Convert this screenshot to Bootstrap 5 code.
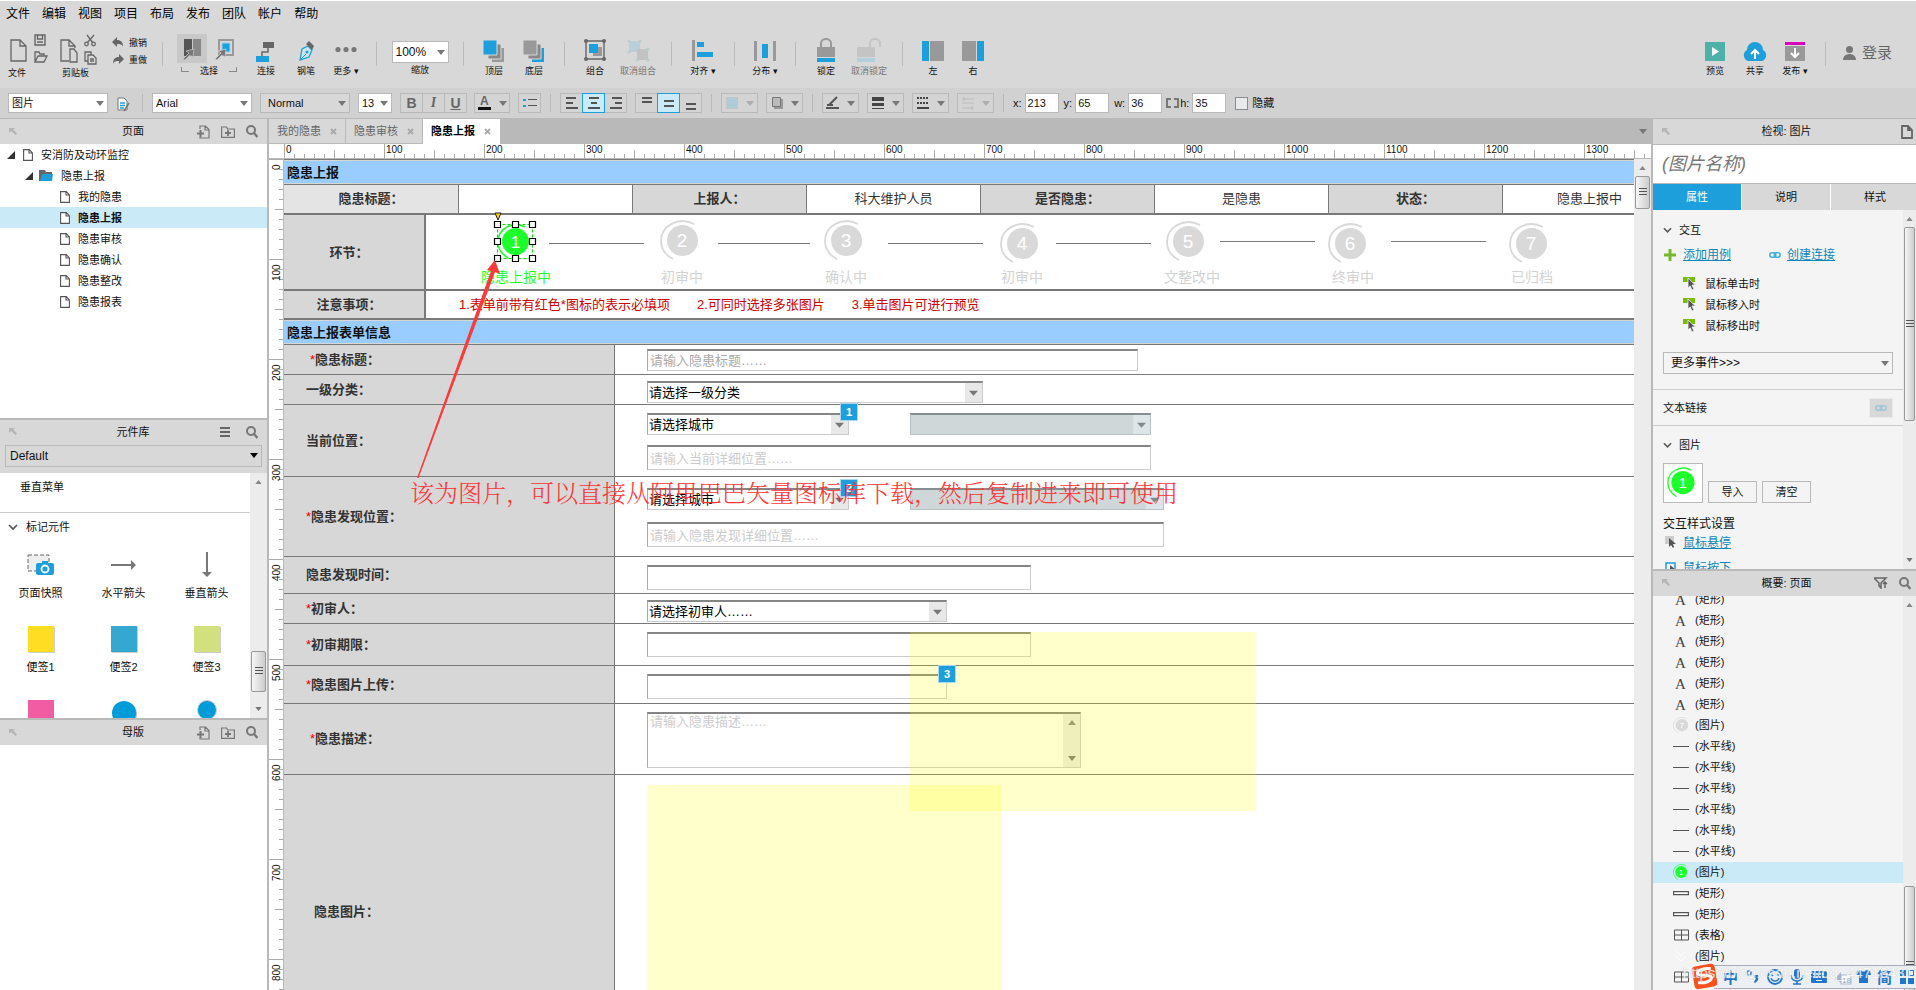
<!DOCTYPE html>
<html lang="zh-CN">
<head>
<meta charset="utf-8">
<meta name="viewport" content="width=device-width, initial-scale=1">
<title>隐患上报</title>
<link rel="stylesheet" href="https://cdn.jsdelivr.net/npm/bootstrap@5.3.0/dist/css/bootstrap.min.css">
<script src="https://cdn.jsdelivr.net/npm/bootstrap@5.3.0/dist/js/bootstrap.bundle.min.js"></script>
<style>
:root{--chrome:#d8d8d8;--edge:#b9b9b9;--ink:#666;--blue:#1c9fdb;--sel:#cbeaf7;--line:#797979;--cell:#d7d7d7}
body{font:11px/20px "Liberation Sans","Noto Sans CJK SC",sans-serif;color:#111;background:var(--chrome);height:100vh;overflow:hidden}
button,input,select,textarea{font:inherit;color:inherit;border-radius:0}
button{border:0;background:none;padding:0}
svg{display:block;flex:none}
p,h2,ul{margin:0;padding:0;font-size:inherit;line-height:inherit}
/* menu and toolbar */
.menubar{height:26px;padding:2px 6px 0;gap:12px;border-top:1px solid #fff}
.menubar a{font-size:12px;line-height:22px;color:#000;text-decoration:none}
.toolbar{height:62px;padding:8px 0 0 8px;font-size:9px}
.toolbar button,.toolbar label{line-height:14px}
.tool{width:40px;display:flex;flex-direction:column;align-items:center}
.tool svg{height:30px}
.tool-mid{width:42px}
.tool-wide{width:46px}
.dim{color:#777}
.tsep{width:1px;height:24px;background:#bbb;margin:8px 10px 0}
.duo{width:42px;margin-right:8px}
.undo{width:44px}
.undo button{height:17px;display:flex;align-items:center;gap:5px}
.pick{width:64px;margin:0 5px 0 4px}
.pick button{width:30px;height:29px;display:flex;align-items:center;justify-content:center}
.pick .on{background:#c8c8c8}
.brk{width:8px;height:5px;border:solid #888;border-width:0 0 1px 1px}
.brk-r{border-width:0 1px 1px 0}
.zoomtool{width:66px}
.axsel{appearance:none;border:1px solid var(--edge);background:#fff url("data:image/svg+xml,%3Csvg xmlns='http://www.w3.org/2000/svg' width='8' height='5'%3E%3Cpath d='M0 0h8L4 5z' fill='%23777'/%3E%3C/svg%3E") no-repeat right 3px center;padding:0 12px 0 3px}
.zoomtool .axsel{width:57px;height:22px;margin:7px 0 0;font-size:12px;line-height:18px}
.login{font-size:15px;color:#666;gap:6px;margin:8px 24px 0 7px;height:22px;line-height:20px}
/* style bar */
.stylebar{height:31px;background:#d1d1d1;border-bottom:1px solid var(--edge);padding:5px 0 0 8px}
.stylebar .axsel,.num{height:20px;line-height:18px;border:1px solid var(--edge)}
.w100{width:100px}.w90{width:90px}.w34{width:34px}
.stylebar .grey{background-color:var(--chrome);padding-left:7px}
.sbtn{height:20px;width:23px;border:1px solid var(--edge);display:inline-flex;align-items:center;justify-content:center;color:var(--ink);margin-right:-1px;background:#d4d4d4}
.sbtn.on{border-color:var(--blue);background:var(--sel);z-index:1}
.sbtn.drop{width:37px;gap:7px;margin:0 8px 0 0}
.sbtn.ink{width:36px;margin-left:8px}
.ssep{width:1px;height:18px;background:var(--edge);margin:1px 9px 0 1px}
.num{width:34px;background:#fff;padding:0 2px;margin:0 5px 0 3px}
.stylebar label{line-height:20px}
.hidebox{width:13px;height:13px;border:1px solid #8c8c8c;background:#e8eaec}
.glyph{font:bold 14px/18px "Liberation Sans",sans-serif}
.it{font:italic bold 14px/18px "Liberation Serif",serif}
/* docked panels */
.side-l{width:269px;border-right:2px solid var(--edge)}
.side-r{width:265px;border-left:2px solid var(--edge)}
.dock{min-height:0;overflow:hidden;display:flex;flex-direction:column;flex-basis:0;background:#fff}
.g300{flex-grow:300}.g271{flex-grow:271}.g451{flex-grow:451}.g420{flex-grow:420}
.cut{border-bottom:2px solid var(--edge)}
.dockhead{height:25px;background:var(--chrome);flex:none;padding:0 18px 0 9px;position:relative}
.side-r .dockhead{padding-right:13px}
.dockhead h2{flex:1;text-align:center;line-height:25px;font-weight:400}
.dockhead .acts{position:absolute;right:9px;gap:11px}
.tree button{display:flex;align-items:center;width:100%;height:21px;text-align:left;gap:8px;line-height:20px}
.lv0{padding-left:7px!important}.lv1{padding-left:25px!important}.lv2{padding-left:60px!important}
.picked{background:var(--sel)}
.libsel{background:var(--chrome);height:28px;padding:0 5px;flex:none}
.libsel select{width:257px;height:22px;font-size:12px;padding-left:4px;background:url("data:image/svg+xml,%3Csvg xmlns='http://www.w3.org/2000/svg' width='8' height='5'%3E%3Cpath d='M0 0h8L4 5z'/%3E%3C/svg%3E") no-repeat right 3px center}
.sb{width:17px;background:#ececec;flex:none;position:relative;display:flex;flex-direction:column;justify-content:space-between;align-items:center;padding:7px 0}
.thumb{position:absolute;left:1px;right:1px;border:1px solid #999;border-radius:2px;background:linear-gradient(90deg,#f6f6f6,#ccc);display:flex;align-items:center;justify-content:center}
.thumb::after{content:"";width:8px;height:9px;background:repeating-linear-gradient(#555 0 1px,transparent 1px 3px)}
.t-lib{top:178px;height:41px}.t-cv{top:17px;height:33px}.t-in{top:17px;height:194px}.t-out{top:290px;height:160px}
.libgrid{display:grid;grid-template-columns:repeat(3,83px);margin-left:-1px}
.libgrid>div{display:flex;flex-direction:column;align-items:center;height:74px}
.libgrid svg{width:38px;height:38px}
/* editor */
.editor{min-width:0;background:#fff}
.tabsrow{height:25px;background:var(--edge)}
.tabsrow button{width:77px;height:25px;background:var(--chrome);color:#666;padding:0 8px;border:solid var(--edge);border-width:0 1px 1px 0;display:flex;align-items:center;justify-content:space-between}
.tabsrow button.on{background:#fff;color:#000;font-weight:700;border-color:#fff}
.hruler{height:15px;border-bottom:1px solid var(--edge);padding-left:15px;overflow:hidden;font-size:10px}
.hruler div{display:flex;width:1367px;height:14px;flex:none;background:
 repeating-linear-gradient(90deg,#aaa 0 1px,transparent 1px 100px),
 repeating-linear-gradient(90deg,#aaa 0 1px,transparent 1px 50px) 0 6px/100% 8px no-repeat,
 repeating-linear-gradient(90deg,#aaa 0 1px,transparent 1px 10px) 0 10px/100% 4px no-repeat}
.hruler span{width:100px;padding-left:2px;line-height:12px;flex:none}
.vruler{width:15px;border-right:1px solid var(--edge);flex:none;overflow:hidden;font-size:10px;background:
 repeating-linear-gradient(#aaa 0 1px,transparent 1px 100px),
 repeating-linear-gradient(#aaa 0 1px,transparent 1px 50px) 6px 0/8px 100% no-repeat,
 repeating-linear-gradient(#aaa 0 1px,transparent 1px 10px) 10px 0/4px 100% no-repeat}
.vruler span{display:block;height:100px;padding-bottom:5px;writing-mode:vertical-rl;transform:rotate(180deg);line-height:12px;padding-right:2px;text-align:right}
.canvas{position:relative;overflow:hidden;flex:1;min-width:0;font-size:13px;color:#333}
.board{width:1393px}
.band{height:26px;background:#9cf;border:solid var(--line);border-width:1px 0;box-shadow:inset 0 1px #d7d7d7,inset 0 -1px #d7d7d7;font-weight:700;color:#111;line-height:25px;padding-left:3px}
.band.second{height:25px;border-top:0}
.info{display:grid;grid-template-columns:175px repeat(7,174px);height:30px;border-bottom:2px solid var(--line);text-align:center;line-height:28px}
.info>*{border-right:1px solid var(--line)}
.hd{background:var(--cell);font-weight:700}
.hd.pale{background:#e4e4e4}
.strip{border-bottom:2px solid var(--line)}
.strip .hd{width:142px;border-right:2px solid var(--line);text-align:center;padding-right:10px}
.steps{height:76px;line-height:75px}
.remarks{height:29px;line-height:28px;color:#c00}
.remarks .hd{color:#333}
.remarks span{margin-left:27px}
.remarks span:nth-child(2){margin-left:33px}
.frow{border-bottom:1px solid var(--line)}
.frow>label{width:331px;background:var(--cell);border-right:1px solid var(--line);padding-left:22px;font-weight:700;display:flex;align-items:center;flex:none}
.frow>.inset{padding-left:26px}
.frow i{color:#e00;font-style:normal;font-weight:400}
.frow>div{padding-left:32px}
.h30{height:30px}.h37{height:37px}.h38{height:38px}.h42{height:42px}.h71{height:71px}.h72{height:72px}.h80{height:80px}.h274{height:274px}
.pt4{padding-top:4px}.pt6{padding-top:6px}.pt8{padding-top:8px}.pt11{padding-top:11px}
.fld{display:block;height:25px;border:1px solid #ccc;border-top:2px solid #858585;border-left-color:#aaa;background:#fff;padding:0 2px;line-height:20px}
.fld::placeholder{color:#ccc;opacity:1}
.mid::placeholder{color:#aaa}
.low{height:22px;line-height:17px}
.gap10{margin-top:10px}.gap12{margin-top:12px}
select.fld{appearance:none;color:#000;line-height:18px;padding:0 1px;background:#fff url("data:image/svg+xml,%3Csvg xmlns='http://www.w3.org/2000/svg' width='17' height='20'%3E%3Cpath d='M0 0h17v20H0z' fill='%23e8e8e8'/%3E%3Cpath d='M4 8h9l-4.500 5z' fill='%23777'/%3E%3C/svg%3E") no-repeat right center}
select.fld:disabled{background:#cfd7d9 url("data:image/svg+xml,%3Csvg xmlns='http://www.w3.org/2000/svg' width='17' height='20'%3E%3Cpath d='M0 0h17v20H0z' fill='%23dde5e8'/%3E%3Cpath d='M4 8h9l-4.500 5z' fill='%237f8a8d'/%3E%3C/svg%3E") no-repeat right center;border-color:#b9c2c5;border-top-color:#858d90;opacity:1}
.w202{width:202px}.w241{width:241px}.w254{width:254px}.w300{width:300px}.w336{width:336px}.w384{width:384px}.w434{width:434px}.w491{width:491px}.w504{width:504px}.w517{width:517px}
.second-sel{margin-left:61px}
.fld.area{height:56px;resize:none;line-height:16px;overflow:hidden}
.areawrap{position:relative}
.areawrap .sb{position:absolute;right:1px;top:2px;bottom:1px;padding:6px 0}
/* free canvas layer */
.over{position:absolute;inset:0;width:1392px;height:900px}
.over text{font-family:"Liberation Sans","Noto Sans CJK SC",sans-serif}
.say{position:absolute;left:126px;top:316px;font:300 24px/34px "Noto Serif CJK SC","Noto Sans CJK SC",serif;color:#ff3434;white-space:nowrap}
/* inspector */
.namebox{height:40px;border:solid var(--edge);border-width:1px 0;background:#fff;padding:0 9px;font-size:18px;font-style:italic;width:100%;flex:none}
.namebox::placeholder{color:#777;opacity:1}
.itabs button{width:88px;height:26px;background:var(--chrome);margin-right:1px;flex:none;line-height:24px}
.itabs .on{background:var(--blue);color:#fff}
.insp{background:#f4f4f4;flex:1;min-width:0;overflow:hidden;padding:1px 0 0}
.insp a{color:#0e86b9;font-size:12px}
.pad{padding:0 10px}
.ln{height:21px;display:flex;align-items:center}
.rule{border-top:1px solid #ccc}
.boxed{border:1px solid var(--edge);background:#f4f4f4;height:22px;width:49px;margin-left:5px}
.narrow{width:13px}
.out{background:#f4f4f4;overflow:hidden;flex:1}
.out ul{margin-top:-7px}
.out .tree button{padding-left:20px;gap:6px}
.out .tree svg{width:16px;height:16px}
.ime{position:absolute;right:0;bottom:0;width:226px;height:27px}
.mark-line{position:absolute;right:3px;bottom:8px;font:15px/18px "Liberation Sans",sans-serif;color:#fff;opacity:.75;text-shadow:0 0 1px #aaa;white-space:nowrap}
</style>
</head>
<body class="d-flex flex-column">
<svg width="0" height="0" class="position-absolute" aria-hidden="true">
<defs>
<symbol id="page" viewBox="0 0 10 12"><path d="M.6.6h5.700L9.400 4v7.400H.6zM6 .6V4h3.400" fill="#fff" stroke="#555" stroke-width="1.100"/></symbol>
<symbol id="pop" viewBox="0 0 8 8"><path d="M0 0h6L4.400 1.600 8 5.500 6.500 7 2 3 0 5z" fill="#b5b5b5"/></symbol>
<symbol id="find" viewBox="0 0 12 13"><circle cx="5" cy="5" r="4" fill="none" stroke="#777" stroke-width="2"/><path d="m8 8 3.500 4" stroke="#777" stroke-width="2.400"/></symbol>
<symbol id="addpage" viewBox="0 0 13 14"><path d="M3 4V1h5.500L12 4.500V13H3v-1M8 1v4h4" fill="none" stroke="#777" stroke-width="1.200"/><path d="M0 8.500h7M3.500 5v7" stroke="#777" stroke-width="2"/></symbol>
<symbol id="adddir" viewBox="0 0 14 12"><path d="M.6 11.400V1h5l1 2h6.800v8.400z" fill="none" stroke="#777" stroke-width="1.200"/><path d="M4 7h6M7 4v6" stroke="#777" stroke-width="1.800"/></symbol>
<symbol id="chev" viewBox="0 0 10 6"><path d="m1 1 4 4 4-4" fill="none" stroke="#555" stroke-width="1.700"/></symbol>
<symbol id="dn" viewBox="0 0 8 5"><path d="M0 0h8L4 5z" fill="#777"/></symbol>
<symbol id="up" viewBox="0 0 8 5"><path d="M0 5h8L4 0z" fill="#888"/></symbol>
<symbol id="tri" viewBox="0 0 8 8"><path d="M0 8h8V0z" fill="#333"/></symbol>
<symbol id="x" viewBox="0 0 7 7"><path d="m1 1 5 5m0-5L1 6" stroke="#aaa" stroke-width="1.900"/></symbol>
<symbol id="cur" viewBox="0 0 13 13"><path d="M0 0h12v5H0z" fill="#76bc00"/><path d="M5 1v10l2.200-2L9 13l2-1-2-4h3.500z" fill="#555" stroke="#f4f4f4" stroke-width=".8"/></symbol>
<symbol id="link" viewBox="0 0 12 8"><rect x=".8" y="1.800" width="6" height="4.400" rx="2.200" fill="none" stroke="#41afdc" stroke-width="1.500"/><rect x="5.200" y="1.800" width="6" height="4.400" rx="2.200" fill="none" stroke="#41afdc" stroke-width="1.500"/></symbol>
<symbol id="ln" viewBox="0 0 16 16"><path d="M0 8h16v1H0z" fill="#555"/></symbol>
<symbol id="rc" viewBox="0 0 16 16"><path d="M.6 6.600h14.800v3H.6z" fill="#fff" stroke="#555" stroke-width="1.200"/></symbol>
<symbol id="tb" viewBox="0 0 16 16"><path d="M1.500 3h14v10h-14zM8.500 3v10m-7-5h14" fill="none" stroke="#555"/></symbol>
<symbol id="ltr" viewBox="0 0 16 16"><text x="2" y="14" font-family="Liberation Serif" font-size="15" fill="#444">A</text></symbol>
<symbol id="badge-off" viewBox="0 0 40 40"><circle cx="22.500" cy="20.500" r="15.500" fill="#d9d9d9"/><path d="M34 4C18-4 1 6 1 21c0 8 4 14 12 18" fill="none" stroke="#d9d9d9" stroke-width="1.800"/></symbol>
<symbol id="badge-on" viewBox="0 0 36 35"><circle cx="18.500" cy="17.500" r="13.500" fill="#1cff2b"/><path d="M28 3C16-3 1 4 1 18c0 8 4 12 10 16" fill="none" stroke="#1cff2b" stroke-width="1.600"/><text x="18.500" y="23.500" text-anchor="middle" font-size="17" fill="#fff" font-family="Liberation Sans">1</text></symbol>
</defs></svg>

<nav class="menubar d-flex flex-shrink-0" aria-label="主菜单">
<a href="#">文件</a><a href="#">编辑</a><a href="#">视图</a><a href="#">项目</a><a href="#">布局</a><a href="#">发布</a><a href="#">团队</a><a href="#">帐户</a><a href="#">帮助</a>
</nav>

<header class="toolbar d-flex align-items-start flex-shrink-0">
<button class="duo text-start"><svg width="42" height="32" fill="none" stroke="#666" stroke-width="1.300"><path d="M3 6h9l6 6v15H3zM12 6v6h6"/><path d="M27 1h10v10H27zM29.500 1v4h5V1M29 8h6" stroke-width="1.400"/><path d="M27 28V18h4l1 2h4v2M27 28l3-6h9l-3 6z"/></svg><span class="d-block">文件</span></button>
<button class="duo text-start"><svg width="42" height="32" fill="none" stroke="#666" stroke-width="1.300"><path d="M11 27H3V6h8l6 6v2M11 6v6h6"/><path d="M12 15h4l3 4v9h-7z" fill="#d8d8d8"/><path d="m29 1 6 8m1-8-7 8"/><circle cx="28.500" cy="10" r="1.800"/><circle cx="35.500" cy="10" r="1.800"/><path d="M30 18h-3v9h3M27 18h6v3M30 21h5l3 3v6h-8zM32 25h4m-4 2h4"/></svg><span class="d-block ps-1">剪贴板</span></button>
<div class="undo"><button><svg width="12" height="11" class="ms-1"><path d="M0 5 5 0v3c4 0 6 2 6 7C10 7 8 7 5 7v3z" fill="#666"/></svg>撤销</button><button><svg width="12" height="11" class="ms-1"><path d="M12 5 7 0v3C3 3 1 5 1 10c1-3 3-3 6-3v3z" fill="#666"/></svg>重做</button></div>
<span class="tsep"></span>
<div class="pick"><div class="d-flex gap-1"><button class="on" aria-label="相交选中"><svg width="22" height="24"><path d="M3 2h8v17H3z" fill="#555"/><path d="M12 2h8v17h-8z" fill="#888"/><path d="m2 22 6-6-3-2 8-2-1 8-3-2-5 5z" fill="#777" stroke="#ccc" stroke-width=".7"/></svg></button><button aria-label="包含选中"><svg width="22" height="24"><path d="M4 3h14v15H4z" fill="none" stroke="#999" stroke-width="2"/><path d="M7 6h8v9H7z" fill="#1c9fdb" stroke="#9bd3ee"/><path d="m0 22 6-6-3-2 8-2-1 8-3-2-5 5z" fill="#777" stroke="#d8d8d8" stroke-width=".7"/></svg></button></div><div class="d-flex justify-content-between px-1"><span class="brk mt-1"></span><span class="lh-1 mt-1">选择</span><span class="brk brk-r mt-1"></span></div></div>
<button class="tool"><svg width="22"><path d="M8 8h11v6H8z" fill="#666"/><path d="M13 14v4H7v4" fill="none" stroke="#666" stroke-width="1.500"/><path d="M1 22h13v6H1z" fill="#1c9fdb"/></svg>连接</button>
<button class="tool"><svg width="18"><path d="M3 26 5 15l6-3 4 4-3 7z" fill="#cbe6f3" stroke="#1c9fdb" stroke-width="1.300"/><path d="m3 26 6-6" stroke="#1c9fdb"/><circle cx="10" cy="18" r="1.500" fill="#1c9fdb"/><path d="m9 10 3-3 5 5-2 4z" fill="#666"/></svg>钢笔</button>
<button class="tool"><svg width="22"><g fill="#777"><circle cx="3" cy="15.500" r="2.600"/><circle cx="11" cy="15.500" r="2.600"/><circle cx="19" cy="15.500" r="2.600"/></g></svg>更多 ▾</button>
<span class="tsep"></span>
<div class="zoomtool text-center"><select class="axsel" id="zoom"><option>100%</option></select><label class="d-block" for="zoom">缩放</label></div>
<span class="tsep"></span>
<button class="tool"><svg width="22"><path d="M9 14h12v14H9z" fill="#999"/><path d="M5 10h13v15H5z" fill="#888" stroke="#d8d8d8"/><path d="M0 6h14v15H0z" fill="#1c9fdb" stroke="#d8d8d8"/></svg>顶层</button>
<button class="tool"><svg width="22"><path d="M9 14h12v14H9z" fill="#1c9fdb"/><path d="M5 10h13v15H5z" fill="#888" stroke="#d8d8d8"/><path d="M0 6h14v15H0z" fill="#999" stroke="#d8d8d8"/></svg>底层</button>
<span class="tsep"></span>
<button class="tool"><svg width="24"><path d="M10 13h9v9h-9z" fill="#999"/><path d="M6 10h9v9H6z" fill="#1c9fdb"/><path d="M3 7h18v18H3z" fill="none" stroke="#666" stroke-width="1.400"/><g fill="#666"><circle cx="3" cy="7" r="2"/><circle cx="21" cy="7" r="2"/><circle cx="3" cy="25" r="2"/><circle cx="21" cy="25" r="2"/></g></svg>组合</button>
<button class="tool tool-wide dim"><svg width="24"><path d="M3 7h11v11H3z" fill="#b9cfd9"/><path d="M11 15h11v11H11z" fill="#c2c2c2"/><g fill="#bccbd1"><circle cx="3" cy="7" r="1.500"/><circle cx="14" cy="7" r="1.500"/><circle cx="3" cy="18" r="1.500"/><circle cx="22" cy="15" r="1.500"/><circle cx="11" cy="26" r="1.500"/><circle cx="22" cy="26" r="1.500"/></g></svg>取消组合</button>
<span class="tsep"></span>
<button class="tool tool-mid"><svg width="24"><path d="M1 6h3v21H1z" fill="#999"/><path d="M6 8h7v5H6zM6 18h16v5H6z" fill="#1c9fdb"/></svg>对齐 ▾</button>
<span class="tsep"></span>
<button class="tool"><svg width="24"><path d="M1 7h3v20H1zM20 7h3v20h-3z" fill="#999"/><path d="M9 10h6v14H9z" fill="#1c9fdb"/></svg>分布 ▾</button>
<span class="tsep"></span>
<button class="tool"><svg width="20"><path d="M5 13V9a5 4 0 0 1 10 0v4" fill="none" stroke="#999" stroke-width="2"/><path d="M1 13h18v10H1z" fill="#999"/><path d="M1 24h18v4H1z" fill="#1c9fdb"/></svg>锁定</button>
<button class="tool tool-wide dim"><svg width="26"><path d="M14 13V9a5 4 0 0 1 10 0v4" fill="none" stroke="#c4c4c4" stroke-width="2"/><path d="M1 13h18v10H1z" fill="#c4c4c4"/><path d="M1 24h18v4H1z" fill="#b3cfdb"/></svg>取消锁定</button>
<span class="tsep"></span>
<button class="tool"><svg width="22"><path d="M0 7h7v20H0z" fill="#1c9fdb"/><path d="M8 7h14v20H8z" fill="#999"/></svg>左</button>
<button class="tool"><svg width="22"><path d="M15 7h7v20h-7z" fill="#1c9fdb"/><path d="M0 7h14v20H0z" fill="#999"/></svg>右</button>
<div class="ms-auto d-flex">
<button class="tool"><svg width="20"><path d="M0 8h20v19H0z" fill="#4db1a7"/><path d="m7 13 7 4.500L7 22z" fill="#fff"/></svg>预览</button>
<button class="tool"><svg width="26"><path d="M6 27a6 6 0 0 1-1-11 8 8 0 0 1 16 0 6 6 0 0 1-1 11z" fill="#1c9fdb"/><path d="M13 25v-8m-4 3 4-4 4 4" fill="none" stroke="#fff" stroke-width="2"/></svg>共享</button>
<button class="tool"><svg width="20"><path d="M0 8h20v3H0z" fill="#d800b8"/><path d="M0 12h20v15H0z" fill="#999"/><path d="M10 14v9m-4-4 4 4 4-4" fill="none" stroke="#fff" stroke-width="2"/></svg>发布 ▾</button>
<span class="tsep"></span>
<button class="login d-flex align-items-center"><svg width="13" height="14"><circle cx="6.500" cy="3.500" r="3.500" fill="#777"/><path d="M0 14c0-8 13-8 13 0z" fill="#777"/></svg>登录</button>
</div>
</header>

<div class="stylebar d-flex flex-shrink-0">
<select class="axsel w100" aria-label="部件类型"><option>图片</option></select>
<svg width="14" height="16" class="mx-2 mt-1"><path d="M2 1h6l3 3v9H2z" fill="#fff" stroke="#777"/><path d="M4 6h5M4 8.500h5M4 11h4" stroke="#1c9fdb" stroke-width="1.300"/><path d="m8 14 5-8" stroke="#777" stroke-width="1.500"/></svg>
<span class="ssep ms-1"></span>
<select class="axsel w100" aria-label="字体"><option>Arial</option></select>
<select class="axsel w90 grey mx-2" aria-label="字形"><option>Normal</option></select>
<select class="axsel w34 me-2" aria-label="字号"><option>13</option></select>
<button class="sbtn glyph">B</button><button class="sbtn it">I</button><button class="sbtn"><u class="glyph">U</u></button>
<button class="sbtn drop ink" aria-label="文字颜色"><svg width="14" height="16"><text x="2" y="10" font-size="12" font-weight="bold" fill="#666">A</text><path d="M0 12h13v3H0z" fill="#111"/></svg><svg width="8" height="5"><use href="#dn"/></svg></button>
<button class="sbtn me-2" aria-label="项目符号"><svg width="14" height="10"><path d="M0 1h3v2H0zM0 7h3v2H0z" fill="#1c9fdb"/><path d="M5 1h9v1H5zM5 7h9v1H5z" fill="#555"/></svg></button>
<span class="ssep"></span>
<button class="sbtn" aria-label="左对齐"><svg width="14" height="13" fill="#555"><path d="M1 0h10v2H1zM1 5h7v2H1zM1 10h12v2H1z"/></svg></button><button class="sbtn on" aria-label="居中"><svg width="14" height="13" fill="#555"><path d="M2 0h10v2H2zM4 5h6v2H4zM1 10h12v2H1z"/></svg></button><button class="sbtn me-2" aria-label="右对齐"><svg width="14" height="13" fill="#555"><path d="M3 0h10v2H3zM6 5h7v2H6zM1 10h12v2H1z"/></svg></button>
<button class="sbtn" aria-label="顶端"><svg width="14" height="13" fill="#555"><path d="M2 0h10v2H2zM2 4h10v2H2z"/></svg></button><button class="sbtn on" aria-label="中部"><svg width="14" height="13" fill="#555"><path d="M2 3h10v2H2zM2 8h10v2H2z"/></svg></button><button class="sbtn me-2" aria-label="底部"><svg width="14" height="13" fill="#555"><path d="M2 6h10v2H2zM2 11h10v2H2z"/></svg></button>
<span class="ssep"></span>
<button class="sbtn drop" aria-label="填充"><svg width="13" height="13"><path d="M.5.5h11v11H.5z" fill="#b0ccd8" stroke="#c4c4c4"/></svg><svg width="8" height="5" opacity=".4"><use href="#dn"/></svg></button><button class="sbtn drop" aria-label="阴影"><svg width="13" height="14"><path d="M3 3h9v10H3z" fill="#999"/><path d="M1.500 1.500h8v9h-8z" fill="#bbb" stroke="#777"/></svg><svg width="8" height="5"><use href="#dn"/></svg></button>
<span class="ssep"></span>
<button class="sbtn drop" aria-label="线色"><svg width="14" height="14"><path d="m3 9 8-8M1 9h6" stroke="#555" stroke-width="2"/><path d="M0 11h13v2H0z" fill="#555"/></svg><svg width="8" height="5"><use href="#dn"/></svg></button><button class="sbtn drop" aria-label="线宽"><svg width="13" height="13" fill="#444"><path d="M0 0h12v4H0zM0 6h12v3H0zM0 11h12v1H0z"/></svg><svg width="8" height="5"><use href="#dn"/></svg></button><button class="sbtn drop" aria-label="线型"><svg width="13" height="13" stroke="#444"><path d="M0 1h12M0 6h12" stroke-dasharray="2 1" stroke-width="2"/><path d="M0 11h12" stroke-width="2"/></svg><svg width="8" height="5"><use href="#dn"/></svg></button><button class="sbtn drop" aria-label="箭头"><svg width="13" height="13" stroke="#bbb"><path d="M0 2h12M0 6h12M0 11h12M2 0v4M10 9v4"/></svg><svg width="8" height="5" opacity=".4"><use href="#dn"/></svg></button>
<span class="ssep"></span>
<label for="nx">x:</label><input class="num" id="nx" value="213"><label for="ny">y:</label><input class="num" id="ny" value="65"><label for="nw">w:</label><input class="num me-0" id="nw" value="36">
<svg width="14" height="20" class="ms-1" fill="none" stroke="#777" stroke-width="2"><path d="M5 6H1v8h4M8 6h4v8H8"/></svg>
<label for="nh">h:</label><input class="num" id="nh" value="35">
<input type="checkbox" class="form-check-input hidebox rounded-0 m-1" id="hid"><label for="hid">隐藏</label>
</div>

<div class="d-flex flex-grow-1" style="min-height:0">
<aside class="side-l d-flex flex-column flex-shrink-0">
<section class="dock g300 cut">
<div class="dockhead d-flex align-items-center"><svg width="8" height="8"><use href="#pop"/></svg><h2>页面</h2><div class="acts d-flex align-items-center"><svg width="13" height="14"><use href="#addpage"/></svg><svg width="14" height="12"><use href="#adddir"/></svg><svg width="12" height="13"><use href="#find"/></svg></div></div>
<ul class="tree list-unstyled">
<li><button class="lv0"><svg width="8" height="8"><use href="#tri"/></svg><svg width="10" height="12"><use href="#page"/></svg>安消防及动环监控</button></li>
<li><button class="lv1"><svg width="8" height="8"><use href="#tri"/></svg><svg width="14" height="12" style="margin-left:-2px"><path d="M0 0h6l1 2h6v9H0z" fill="#666"/><path d="M1 11 3 4h11l-1 7z" fill="#1c9fdb"/></svg>隐患上报</button></li>
<li><button class="lv2"><svg width="10" height="12"><use href="#page"/></svg>我的隐患</button></li>
<li><button class="lv2 picked fw-bold"><svg width="10" height="12"><use href="#page"/></svg>隐患上报</button></li>
<li><button class="lv2"><svg width="10" height="12"><use href="#page"/></svg>隐患审核</button></li>
<li><button class="lv2"><svg width="10" height="12"><use href="#page"/></svg>隐患确认</button></li>
<li><button class="lv2"><svg width="10" height="12"><use href="#page"/></svg>隐患整改</button></li>
<li><button class="lv2"><svg width="10" height="12"><use href="#page"/></svg>隐患报表</button></li>
</ul>
</section>
<section class="dock g300 cut">
<div class="dockhead d-flex align-items-center"><svg width="8" height="8"><use href="#pop"/></svg><h2>元件库</h2><div class="acts d-flex align-items-center gap-3"><svg width="10" height="10" fill="#666"><path d="M0 0h10v2H0zM0 4h10v2H0zM0 8h10v2H0z"/></svg><svg width="12" height="13"><use href="#find"/></svg></div></div>
<div class="libsel"><select class="axsel" aria-label="元件库"><option>Default</option></select></div>
<div class="d-flex flex-grow-1 overflow-hidden">
<div class="flex-grow-1">
<p class="ps-3 pt-1 ms-1" style="height:39px">垂直菜单</p>
<div class="rule d-flex align-items-center ps-2 gap-2 pt-1"><svg width="10" height="6"><use href="#chev"/></svg><span>标记元件</span></div>
<div class="libgrid mt-2">
<div><svg><path d="M6 10h21v16H6z" fill="#eee" stroke="#666" stroke-dasharray="4 2"/><rect x="14" y="18" width="18" height="12" rx="2" fill="#1c9fdb"/><path d="M20 16h6v3h-6z" fill="#1c9fdb"/><circle cx="23" cy="24" r="3.500" fill="none" stroke="#fff" stroke-width="1.800"/></svg>页面快照</div>
<div><svg fill="#777"><path d="M6 19h21v2H6zM26 15l5 5-5 5z"/></svg>水平箭头</div>
<div><svg fill="#777"><path d="M18 7h2v21h-2zM14 27h10l-5 5z"/></svg>垂直箭头</div>
<div><svg><path d="M7 8h26v26H7z" fill="#ccc"/><path d="M6 7h26v26H6z" fill="#ffdd22"/></svg>便签1</div>
<div><svg><path d="M7 8h26v26H7z" fill="#ccc"/><path d="M6 7h26v26H6z" fill="#35a8d0"/></svg>便签2</div>
<div><svg><path d="M7 8h26v26H7z" fill="#ccc"/><path d="M6 7h26v26H6z" fill="#d2e07d"/></svg>便签3</div>
<div><svg><path d="M6 7h26v26H6z" fill="#f25ca2"/></svg></div>
<div><svg><circle cx="20" cy="21" r="12" fill="#bbb"/><circle cx="19" cy="20" r="12" fill="#009cda"/></svg></div>
<div><svg><circle cx="19" cy="17" r="9.500" fill="#009cda" stroke="#ccc"/></svg></div>
</div>
</div>
<div class="sb"><svg width="7" height="4"><use href="#up"/></svg><span class="thumb t-lib"></span><svg width="7" height="4"><use href="#dn"/></svg></div>
</div>
</section>
<section class="dock g271">
<div class="dockhead d-flex align-items-center"><svg width="8" height="8"><use href="#pop"/></svg><h2>母版</h2><div class="acts d-flex align-items-center"><svg width="13" height="14"><use href="#addpage"/></svg><svg width="14" height="12"><use href="#adddir"/></svg><svg width="12" height="13"><use href="#find"/></svg></div></div>
</section>
</aside>

<main class="editor d-flex flex-column flex-grow-1">
<div class="tabsrow d-flex flex-shrink-0"><button>我的隐患<svg width="7" height="7"><use href="#x"/></svg></button><button>隐患审核<svg width="7" height="7"><use href="#x"/></svg></button><button class="on">隐患上报<svg width="7" height="7"><use href="#x"/></svg></button><svg width="8" height="5" class="ms-auto me-1 align-self-center"><use href="#dn"/></svg></div>
<div class="hruler d-flex flex-shrink-0"><div><span>0</span><span>100</span><span>200</span><span>300</span><span>400</span><span>500</span><span>600</span><span>700</span><span>800</span><span>900</span><span>1000</span><span>1100</span><span>1200</span><span>1300</span></div></div>
<div class="d-flex flex-grow-1" style="min-height:0">
<div class="vruler"><span>0</span><span>100</span><span>200</span><span>300</span><span>400</span><span>500</span><span>600</span><span>700</span><span>800</span></div>
<div class="canvas">
<div class="board">
<div class="band">隐患上报</div>
<div class="info"><div class="hd pale">隐患标题：</div><div></div><div class="hd">上报人：</div><div>科大维护人员</div><div class="hd">是否隐患：</div><div>是隐患</div><div class="hd">状态：</div><div>隐患上报中</div></div>
<div class="strip steps d-flex"><div class="hd">环节：</div></div>
<div class="strip remarks d-flex"><div class="hd">注意事项：</div><span>1.表单前带有红色*图标的表示必填项</span><span>2.可同时选择多张图片</span><span>3.单击图片可进行预览</span></div>
<div class="band second">隐患上报表单信息</div>
<form>
<div class="frow h30 d-flex"><label for="f1" class="inset"><i>*</i>隐患标题：</label><div class="pt4"><input id="f1" class="fld low mid w491" placeholder="请输入隐患标题……"></div></div>
<div class="frow h30 d-flex"><label for="f2">一级分类：</label><div class="pt6"><select id="f2" class="fld low w336"><option>请选择一级分类</option></select></div></div>
<div class="frow h72 d-flex"><label for="f3">当前位置：</label><div class="pt8"><div class="d-flex"><select id="f3" class="fld low w202"><option>请选择城市</option></select><select class="fld low w241 second-sel" disabled aria-label="区县"><option></option></select></div><input class="fld gap10 w504" aria-label="当前详细位置" placeholder="请输入当前详细位置……"></div></div>
<div class="frow h80 d-flex"><label for="f4"><i>*</i>隐患发现位置：</label><div class="pt11"><div class="d-flex"><select id="f4" class="fld low w202"><option>请选择城市</option></select><select class="fld low w254 second-sel" disabled aria-label="发现区县"><option></option></select></div><input class="fld gap12 w517" aria-label="发现详细位置" placeholder="请输入隐患发现详细位置……"></div></div>
<div class="frow h37 d-flex"><label for="f5">隐患发现时间：</label><div class="pt8"><input id="f5" class="fld w384"></div></div>
<div class="frow h30 d-flex"><label for="f6"><i>*</i>初审人：</label><div class="pt6"><select id="f6" class="fld low w300"><option>请选择初审人……</option></select></div></div>
<div class="frow h42 d-flex"><label for="f7"><i>*</i>初审期限：</label><div class="pt8"><input id="f7" class="fld w384"></div></div>
<div class="frow h38 d-flex"><label for="f8"><i>*</i>隐患图片上传：</label><div class="pt8"><input id="f8" class="fld w300"></div></div>
<div class="frow h71 d-flex"><label for="f9" class="inset"><i>*</i>隐患描述：</label><div class="pt8"><div class="areawrap"><textarea id="f9" class="fld area w434" placeholder="请输入隐患描述……"></textarea><div class="sb"><svg width="8" height="5"><use href="#up"/></svg><svg width="8" height="5"><use href="#dn"/></svg></div></div></div></div>
<div class="frow h274 d-flex"><label class="inset"><span class="ps-1">隐患图片：</span></label></div>
</form>
</div>
<!-- widgets placed freely on the artboard: step images, connectors, notes, highlight areas -->
<svg class="over" viewBox="0 0 1392 900" aria-hidden="true">
<g fill="#797979"><path d="M265 84h95v1h-95zM434 84h92v1h-92zM604 84h95v1h-95zM772 84h95v1h-95zM936 82h95v1h-95zM1107 82h95v1h-95z"/></g>
<use href="#badge-off" x="376" y="61" width="40" height="40"/><use href="#badge-off" x="540" y="61" width="40" height="40"/><use href="#badge-off" x="716" y="64" width="40" height="40"/><use href="#badge-off" x="882" y="62" width="40" height="40"/><use href="#badge-off" x="1044" y="64" width="40" height="40"/><use href="#badge-off" x="1225" y="64" width="40" height="40"/>
<g font-size="19" fill="#fff" text-anchor="middle"><text x="398" y="88">2</text><text x="562" y="88">3</text><text x="738" y="91">4</text><text x="904" y="89">5</text><text x="1066" y="91">6</text><text x="1247" y="91">7</text></g>
<g font-size="14" fill="#d3d3d3"><text x="197" y="123" fill="#1cff2b">隐患上报中</text><text x="377" y="123">初审中</text><text x="541" y="123">确认中</text><text x="717" y="123">初审中</text><text x="880" y="123">文整改中</text><text x="1048" y="123">终审中</text><text x="1227" y="123">已归档</text></g>
<use href="#badge-on" x="213" y="65" width="36" height="35"/>
<path d="M213.500 65.500h35v34h-35z" fill="none" stroke="#0d0" stroke-dasharray="3 2"/>
<path d="M211 54h6l-3 7z" fill="#fc0" stroke="#222"/>
<g fill="#fff" stroke="#000" stroke-width="1.200"><path d="M210.500 62.500h6v6h-6zM228.500 62.500h6v6h-6zM245.500 62.500h6v6h-6zM210.500 79.500h6v6h-6zM245.500 79.500h6v6h-6zM210.500 96.500h6v6h-6zM228.500 96.500h6v6h-6zM245.500 96.500h6v6h-6z"/></g>
<path d="M626 473h346v179H626z" fill="#ff0" fill-opacity=".2"/><path d="M363 626h355v274H363z" fill="#ff0" fill-opacity=".2"/>
<g fill="#1c9fdb" stroke="#a6d8ef"><path d="M556.500 244.500h17v17h-17zM556.500 320.500h17v17h-17zM654.500 506.500h17v17h-17z"/></g>
<g font-size="11" font-weight="bold" fill="#fff" text-anchor="middle"><text x="565" y="257">1</text><text x="565" y="333">2</text><text x="663" y="519">3</text></g>
<path d="M211 101 203 111l4 1-74 207h1.500L211 113l5 2z" fill="#fb3a3a"/>
</svg>
<p class="say">该为图片，可以直接从阿里巴巴矢量图标库下载，然后复制进来即可使用</p>
</div>
<div class="sb"><svg width="7" height="4"><use href="#up"/></svg><span class="thumb t-cv"></span></div>
</div>
</main>

<aside class="side-r d-flex flex-column flex-shrink-0 position-relative">
<section class="dock g451 cut">
<div class="dockhead d-flex align-items-center"><svg width="8" height="8"><use href="#pop"/></svg><h2>检视: 图片</h2><div class="acts d-flex" style="right:3px"><svg width="12" height="14"><path d="M1 1h6l4 4v8H1zM7 1v4h4" fill="none" stroke="#666" stroke-width="1.800"/></svg></div></div>
<input class="namebox" placeholder="(图片名称)" aria-label="名称">
<div class="itabs d-flex flex-shrink-0 overflow-hidden"><button class="on">属性</button><button>说明</button><button>样式</button></div>
<div class="d-flex flex-grow-1 overflow-hidden">
<div class="insp">
<div class="pad pt-2">
<div class="ln" style="gap:7px"><svg width="9" height="6"><use href="#chev"/></svg>交互</div>
<div class="ln my-1"><svg width="12" height="12" style="margin:0 7px 0 1px"><path d="M4.500 0h3v4.500H12v3H7.500V12h-3V7.500H0v-3h4.500z" fill="#76b82a"/></svg><a href="#">添加用例</a><svg width="12" height="8" style="margin:0 6px 0 38px"><use href="#link"/></svg><a href="#">创建连接</a></div>
<div class="ps-3 pt-1 ms-1">
<div class="ln" style="gap:9px"><svg width="13" height="13"><use href="#cur"/></svg>鼠标单击时</div>
<div class="ln" style="gap:9px"><svg width="13" height="13"><use href="#cur"/></svg>鼠标移入时</div>
<div class="ln" style="gap:9px"><svg width="13" height="13"><use href="#cur"/></svg>鼠标移出时</div>
</div>
<select class="axsel w-100 mt-3" style="height:22px;font-size:12px;padding-left:7px;background-color:#f4f4f4" aria-label="更多事件"><option>更多事件&gt;&gt;&gt;</option></select>
</div>
<div class="rule pad d-flex align-items-center justify-content-between" style="margin-top:15px;height:36px"><span>文本链接</span><button class="border border-secondary-subtle d-flex align-items-center justify-content-center" style="width:24px;height:20px;background:#d8d8d8" aria-label="链接"><svg width="12" height="8" opacity=".4"><use href="#link"/></svg></button></div>
<div class="rule pad pt-2">
<div class="ln" style="gap:7px"><svg width="9" height="6"><use href="#chev"/></svg>图片</div>
<div class="d-flex align-items-end mt-2"><svg width="40" height="40" style="border:1px solid #b9b9b9;background:#fff"><use href="#badge-on" x="3" y="3" width="31" height="31"/></svg><button class="boxed">导入</button><button class="boxed">清空</button></div>
<div class="ln mt-2 pt-1" style="font-size:12px">交互样式设置</div>
<div class="ln" style="gap:7px"><svg width="13" height="13"><path d="M2 0h9v8H2z" fill="#ccc"/><path d="M6 2v9l2-2 2 3 1-1-1-3h3z" fill="#555"/></svg><a href="#">鼠标悬停</a></div>
<div class="ln mt-1" style="gap:7px"><svg width="13" height="13"><path d="M3 2h9v8H3z" fill="none" stroke="#1c9fdb" stroke-width="1.500"/><path d="M7 4v8l2-2 2 2 1-1-1-2h2z" fill="#555"/></svg><a href="#">鼠标按下</a></div>
</div>
</div>
<div class="sb narrow"><svg width="7" height="4"><use href="#up"/></svg><span class="thumb t-in"></span><svg width="7" height="4"><use href="#dn"/></svg></div>
</div>
</section>
<section class="dock g420">
<div class="dockhead d-flex align-items-center"><svg width="8" height="8"><use href="#pop"/></svg><h2>概要: 页面</h2><div class="acts d-flex align-items-center" style="right:5px"><svg width="14" height="12" fill="none" stroke="#666" stroke-width="1.500"><path d="M0 1h12L7 6v5L5 9V6z"/><path d="M11 11V5M9 7l2-2 2 2"/></svg><svg width="12" height="13"><use href="#find"/></svg></div></div>
<div class="d-flex flex-grow-1 overflow-hidden">
<div class="out"><ul class="tree list-unstyled">
<li><button><svg><use href="#ltr"/></svg>(矩形)</button></li>
<li><button><svg><use href="#ltr"/></svg>(矩形)</button></li>
<li><button><svg><use href="#ltr"/></svg>(矩形)</button></li>
<li><button><svg><use href="#ltr"/></svg>(矩形)</button></li>
<li><button><svg><use href="#ltr"/></svg>(矩形)</button></li>
<li><button><svg><use href="#ltr"/></svg>(矩形)</button></li>
<li><button><svg viewBox="0 0 40 40"><use href="#badge-off"/><text x="22" y="28" text-anchor="middle" font-size="20" fill="#fff">7</text></svg>(图片)</button></li>
<li><button><svg><use href="#ln"/></svg>(水平线)</button></li>
<li><button><svg><use href="#ln"/></svg>(水平线)</button></li>
<li><button><svg><use href="#ln"/></svg>(水平线)</button></li>
<li><button><svg><use href="#ln"/></svg>(水平线)</button></li>
<li><button><svg><use href="#ln"/></svg>(水平线)</button></li>
<li><button><svg><use href="#ln"/></svg>(水平线)</button></li>
<li><button class="picked"><svg><use href="#badge-on"/></svg>(图片)</button></li>
<li><button><svg><use href="#rc"/></svg>(矩形)</button></li>
<li><button><svg><use href="#rc"/></svg>(矩形)</button></li>
<li><button><svg><use href="#tb"/></svg>(表格)</button></li>
<li><button><svg fill="none" stroke="#fff"><path d="m3 3 5 5 5-5M3 8l5 5 5-5"/></svg>(图片)</button></li>
<li><button aria-label="表格"><svg><use href="#tb"/></svg></button></li>
</ul></div>
<div class="sb narrow"><svg width="7" height="4"><use href="#up"/></svg><span class="thumb t-out"></span></div>
</div>
</section>
<!-- input method status bar -->
<svg class="ime" viewBox="0 0 226 27" fill="#2276c9">
<path d="M24 3h202v22H24z" fill="#eceff4"/><path d="M24 2.500h202M24 25.500h202" stroke="#aab" fill="none"/>
<g transform="rotate(-10 14 13)"><rect x="3" y="2" width="23" height="23" rx="4" fill="#f4511e"/><path d="M22 7C15 5 8 6 8 9.500s13 2 13 6-8 5-14 3" fill="none" stroke="#fff" stroke-width="3"/></g>
<g font-family="Noto Sans CJK SC" font-weight="bold" font-size="15"><text x="33" y="20">中</text><text x="187" y="20">简</text></g>
<circle cx="59" cy="10" r="2" fill="none" stroke="#2276c9" stroke-width="1.500"/><path d="M64 12h4c1 4 0 6-3 8l-1-1 2-4h-2z"/>
<circle cx="85" cy="14" r="7" fill="none" stroke="#2276c9" stroke-width="1.800"/><circle cx="82.500" cy="12" r="1.200"/><circle cx="87.500" cy="12" r="1.200"/><path d="M81 15c1 4 7 4 8 0" fill="none" stroke="#2276c9" stroke-width="1.300"/>
<rect x="104" y="6" width="6" height="10" rx="3"/><path d="M101 12c0 8 12 8 12 0M107 18v3M103 21h8" fill="none" stroke="#2276c9" stroke-width="1.600"/>
<rect x="121" y="8" width="16" height="12" rx="1"/><path d="M123 11h12M123 14h12" stroke="#fff" stroke-width="1.500" stroke-dasharray="2 1"/><path d="M126 17.500h6" stroke="#fff"/>
<path d="M145 15l6-6v3l8 3v4h-8v1z" fill="#a9b5cc"/><rect x="151" y="12" width="10" height="9" fill="#fff" stroke="#a9b5cc"/><text x="152" y="20" font-size="8" fill="#8899bb">18</text>
<path d="M167 8l4-1c1 2 4 2 5 0l4 1 1 4h-3v8h-9v-8h-3z"/>
<path d="M210 7h6v6h-6zM210 15h6v6h-6zM218 15h6v6h-6z"/><path d="M218.500 7.500h5v5h-5z" fill="none" stroke="#2276c9"/>
</svg>
<p class="mark-line">https://blog.csdn.net/qq_44718431</p>
</aside>
</div>
</body>
</html>
